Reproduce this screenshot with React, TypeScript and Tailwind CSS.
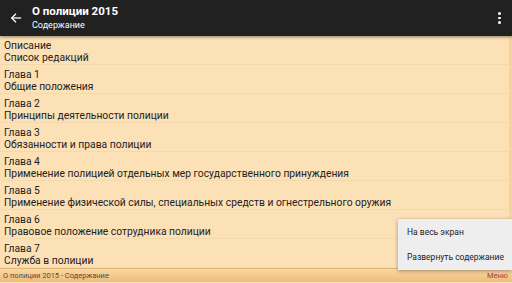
import React from 'react';

const rows: [string, string][] = [
    ['Описание', 'Список редакций'],
    ['Глава 1', 'Общие положения'],
    ['Глава 2', 'Принципы деятельности полиции'],
    ['Глава 3', 'Обязанности и права полиции'],
    ['Глава 4', 'Применение полицией отдельных мер государственного принуждения'],
    ['Глава 5', 'Применение физической силы, специальных средств и огнестрельного оружия'],
    ['Глава 6', 'Правовое положение сотрудника полиции'],
    ['Глава 7', 'Служба в полиции'],
];

const App: React.FC = () => {
    return (
        <div className="relative w-[512px] h-[283px] overflow-hidden bg-[#fce0b6] font-['Roboto',sans-serif]">
            <header className="relative z-10 h-[36px] bg-[#212121] flex items-center shadow-[0_1px_3px_rgba(0,0,0,0.45)]">
                <div className="w-[31px] flex justify-center pl-[1px]">
                    <svg width="12" height="12" viewBox="0 0 24 24" fill="none" stroke="white" strokeWidth="2.6" strokeLinecap="square">
                        <path d="M21 12H4" />
                        <path d="M11 4.5L3.5 12l7.5 7.5" />
                    </svg>
                </div>
                <div className="flex-1 flex flex-col text-white leading-none pl-[1px]">
                    <span className="text-[11.5px] font-bold mb-[4px]">О полиции 2015</span>
                    <span className="text-[9px]">Содержание</span>
                </div>
                <div className="w-[24px] flex flex-col items-center gap-[2px] pr-[1px]">
                    <span className="w-[2.5px] h-[2.5px] bg-white rounded-full" />
                    <span className="w-[2.5px] h-[2.5px] bg-white rounded-full" />
                    <span className="w-[2.5px] h-[2.5px] bg-white rounded-full" />
                </div>
            </header>

            <div className="flex">
                <ul className="flex-1">
                    {rows.map(([a, b]) => (
                        <li key={a} className="h-[29px] pt-[4px] px-[4px] border-b border-[#f4d9ad] text-[10.3px] leading-[12px] text-[#222]">
                            <div>{a}</div>
                            <div>{b}</div>
                        </li>
                    ))}
                </ul>
                <div className="w-[3px] bg-[#f8d29c]" />
            </div>

            <footer className="h-[14px] bg-gradient-to-b from-[#f9d7a3] to-[#eebd78] border-t border-[#e6b877] flex items-center justify-between px-[3px] text-[7.5px]">
                <span className="text-[#5a4a3a]">О полиции 2015 - Содержание</span>
                <span className="text-[#a0403a] pr-[1px]">Меню</span>
            </footer>

            <div className="absolute left-[398px] top-[219px] w-[114px] h-[51px] bg-[#eeeeee] shadow-[0_1px_4px_rgba(0,0,0,0.35)] flex flex-col text-[8.5px] text-[#222]">
                <div className="h-[25px] flex items-center pl-[9px] pt-[2px]">На весь экран</div>
                <div className="h-[25px] flex items-center pl-[9px] pt-[1px]">Развернуть содержание</div>
            </div>
        </div>
    );
};

export default App;
